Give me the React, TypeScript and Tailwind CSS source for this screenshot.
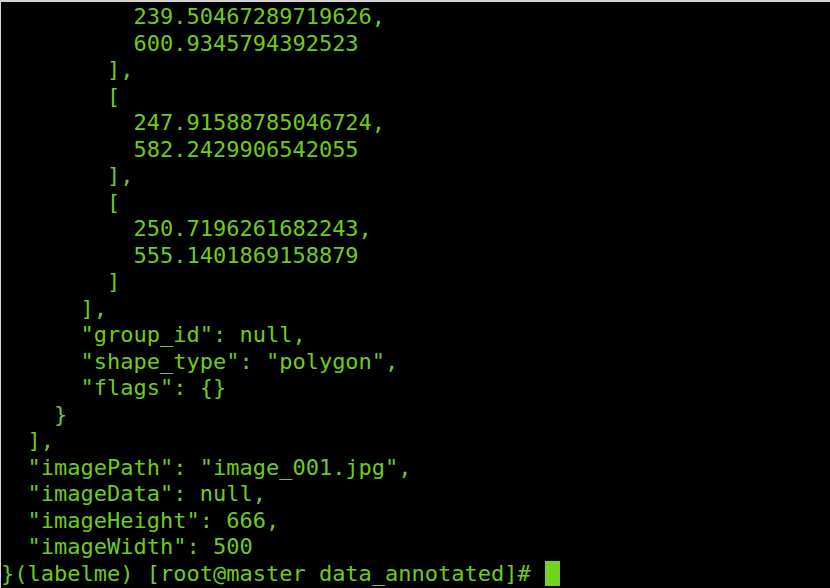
import React from "react";

const lines = [
  "          239.50467289719626,",
  "          600.9345794392523",
  "        ],",
  "        [",
  "          247.91588785046724,",
  "          582.2429906542055",
  "        ],",
  "        [",
  "          250.7196261682243,",
  "          555.1401869158879",
  "        ]",
  "      ],",
  '      "group_id": null,',
  '      "shape_type": "polygon",',
  '      "flags": {}',
  "    }",
  "  ],",
  '  "imagePath": "image_001.jpg",',
  '  "imageData": null,',
  '  "imageHeight": 666,',
  '  "imageWidth": 500',
];

function App() {
  return (
    <div className="flex h-[588px] w-[830px] flex-col overflow-hidden border-t-2 border-l border-[#d4d4d4] bg-black pt-[2px] font-['DejaVu_Sans_Mono',monospace] text-[22px] leading-[26.5px] text-[#6fcb1d]">
      {lines.map((line, i) => (
        <div key={i} className="whitespace-pre">
          {line}
        </div>
      ))}
      <div className="flex items-center whitespace-pre">
        <span>{"}(labelme) [root@master data_annotated]# "}</span>
        <span className="ml-[1px] mb-[2px] h-[25px] w-[15px] bg-[#72d41f]" />
      </div>
    </div>
  );
}

export default App;
